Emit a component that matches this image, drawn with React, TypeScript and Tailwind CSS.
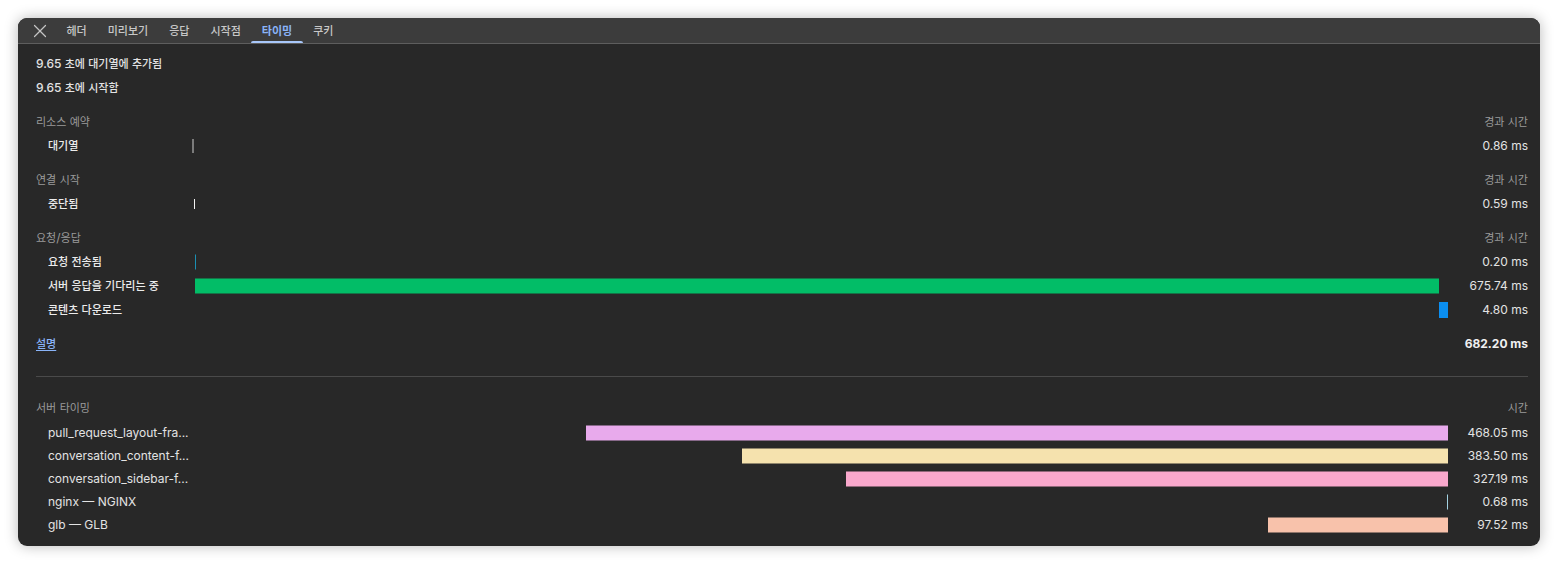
import React, { Fragment } from "react";
import { X } from "lucide-react";

const HANGUL = /([\uAC00-\uD7A3]+)/;

function T({ s }: { s: string }) {
  const parts = s.split(HANGUL).filter((p) => p.length > 0);
  return (
    <span className="whitespace-pre">
      {parts.map((p, i) =>
        /[\uAC00-\uD7A3]/.test(p) ? (
          <span key={i} className="text-[11px]">
            {p}
          </span>
        ) : (
          <Fragment key={i}>{p}</Fragment>
        )
      )}
    </span>
  );
}

type Bar = { left: number; width: number; h: number; color: string };
type TRow = { label: string; value: string; bars: Bar[] };
type Section = { title: string; right: string; rows: TRow[] };

const TRACK = 1256;

const sections: Section[] = [
  {
    title: "리소스 예약",
    right: "경과 시간",
    rows: [{ label: "대기열", value: "0.86 ms", bars: [{ left: 0, width: 2, h: 14, color: "#7b7b7b" }] }],
  },
  {
    title: "연결 시작",
    right: "경과 시간",
    rows: [{ label: "중단됨", value: "0.59 ms", bars: [{ left: 2, width: 1, h: 10, color: "#f2f2f2" }] }],
  },
  {
    title: "요청/응답",
    right: "경과 시간",
    rows: [
      { label: "요청 전송됨", value: "0.20 ms", bars: [{ left: 3, width: 1, h: 15, color: "#1b8fb3" }] },
      { label: "서버 응답을 기다리는 중", value: "675.74 ms", bars: [{ left: 3, width: 1244, h: 15, color: "#02bd67" }] },
      { label: "콘텐츠 다운로드", value: "4.80 ms", bars: [{ left: 1247, width: 9, h: 16, color: "#0b8ef0" }] },
    ],
  },
];

const total = 682.2;
const serverRows = [
  { label: "pull_request_layout-fra...", ms: 468.05, color: "#e8aaec" },
  { label: "conversation_content-f...", ms: 383.5, color: "#f5e2ae" },
  { label: "conversation_sidebar-f...", ms: 327.19, color: "#f9a8cc" },
  { label: "nginx — NGINX", ms: 0.68, color: "#a3d2e2" },
  { label: "glb — GLB", ms: 97.52, color: "#f8c2ab" },
];

const tabs = ["헤더", "미리보기", "응답", "시작점", "타이밍", "쿠키"];

function Track({ bars }: { bars: Bar[] }) {
  return (
    <div className="relative h-full w-[1256px]">
      {bars.map((b, i) => (
        <div
          key={i}
          className="absolute top-1/2 -translate-y-1/2"
          style={{ left: b.left, width: b.width, height: b.h, background: b.color }}
        />
      ))}
    </div>
  );
}

export default function App() {
  return (
    <div className="w-[1558px] h-[564px] bg-white p-[18px] font-[Inter,'Noto_Sans_CJK_KR',sans-serif] text-[12px] text-[#e3e3e3]">
      <div className="w-[1522px] h-[528px] rounded-[9px] bg-[#282828] overflow-hidden shadow-[0_0_14px_rgba(0,0,0,0.28)] flex flex-col">
        {/* Tab bar */}
        <div className="h-[26px] shrink-0 bg-[#3c3c3c] border-b border-[#5e5e5e] flex items-stretch">
          <div className="ml-[15px] w-[14px] flex items-center justify-center text-[#c4c4c4]">
            <X size={22} strokeWidth={1.3} className="shrink-0" />
          </div>
          <div className="flex items-stretch ml-[9px]">
            {tabs.map((t) => {
              const active = t === "타이밍";
              return (
                <div
                  key={t}
                  className={
                    active
                      ? "relative px-[10.5px] flex items-center font-semibold text-[#8ab4f8]"
                      : "relative px-[10.5px] flex items-center font-medium text-[#c8c8c8]"
                  }
                >
                  <T s={t} />
                  {active && (
                    <div className="absolute left-0 right-0 bottom-0 h-[2.5px] rounded-t-[2px] bg-[#a8c7fa]" />
                  )}
                </div>
              );
            })}
          </div>
        </div>

        {/* Content */}
        <div className="flex-1 pl-[18px] pr-[12px] pt-[8px] flex flex-col">
          <div className="h-[24px] flex items-center font-medium">
            <T s="9.65 초에 대기열에 추가됨" />
          </div>
          <div className="h-[24px] flex items-center font-medium">
            <T s="9.65 초에 시작함" />
          </div>

          {sections.map((sec) => (
            <div key={sec.title} className="mt-[10px] flex flex-col">
              <div className="h-[24px] flex items-center justify-between text-[#9a9a9a]">
                <T s={sec.title} />
                <T s={sec.right} />
              </div>
              {sec.rows.map((r) => (
                <div key={r.label} className="h-[24px] flex items-center">
                  <div className="w-[156px] pl-[12px] font-medium text-[#ececec] whitespace-nowrap">
                    <T s={r.label} />
                  </div>
                  <Track bars={r.bars} />
                  <div className="w-[80px] text-right text-[#e3e3e3]">{r.value}</div>
                </div>
              ))}
            </div>
          ))}

          <div className="mt-[10px] h-[24px] flex items-center justify-between">
            <a className="text-[#8ab4f8] underline underline-offset-2 font-medium cursor-pointer">
              <T s="설명" />
            </a>
            <span className="font-bold text-[#f0f0f0]">682.20 ms</span>
          </div>

          <div className="mt-[20px] h-px bg-[#4a4a4a]" />

          <div className="mt-[19px] h-[24px] flex items-center justify-between text-[#9a9a9a]">
            <T s="서버 타이밍" />
            <T s="시간" />
          </div>
          <div className="mt-[1px] flex flex-col">
            {serverRows.map((r) => {
              const w = Math.max(1, Math.round((r.ms / total) * TRACK));
              return (
                <div key={r.label} className="h-[23px] flex items-center">
                  <div className="w-[156px] pl-[12px] text-[#e3e3e3] whitespace-nowrap">{r.label}</div>
                  <Track bars={[{ left: TRACK - w, width: w, h: 15, color: r.color }]} />
                  <div className="w-[80px] text-right text-[#e3e3e3]">
                    {r.ms.toFixed(2)} ms
                  </div>
                </div>
              );
            })}
          </div>
        </div>
      </div>
    </div>
  );
}
